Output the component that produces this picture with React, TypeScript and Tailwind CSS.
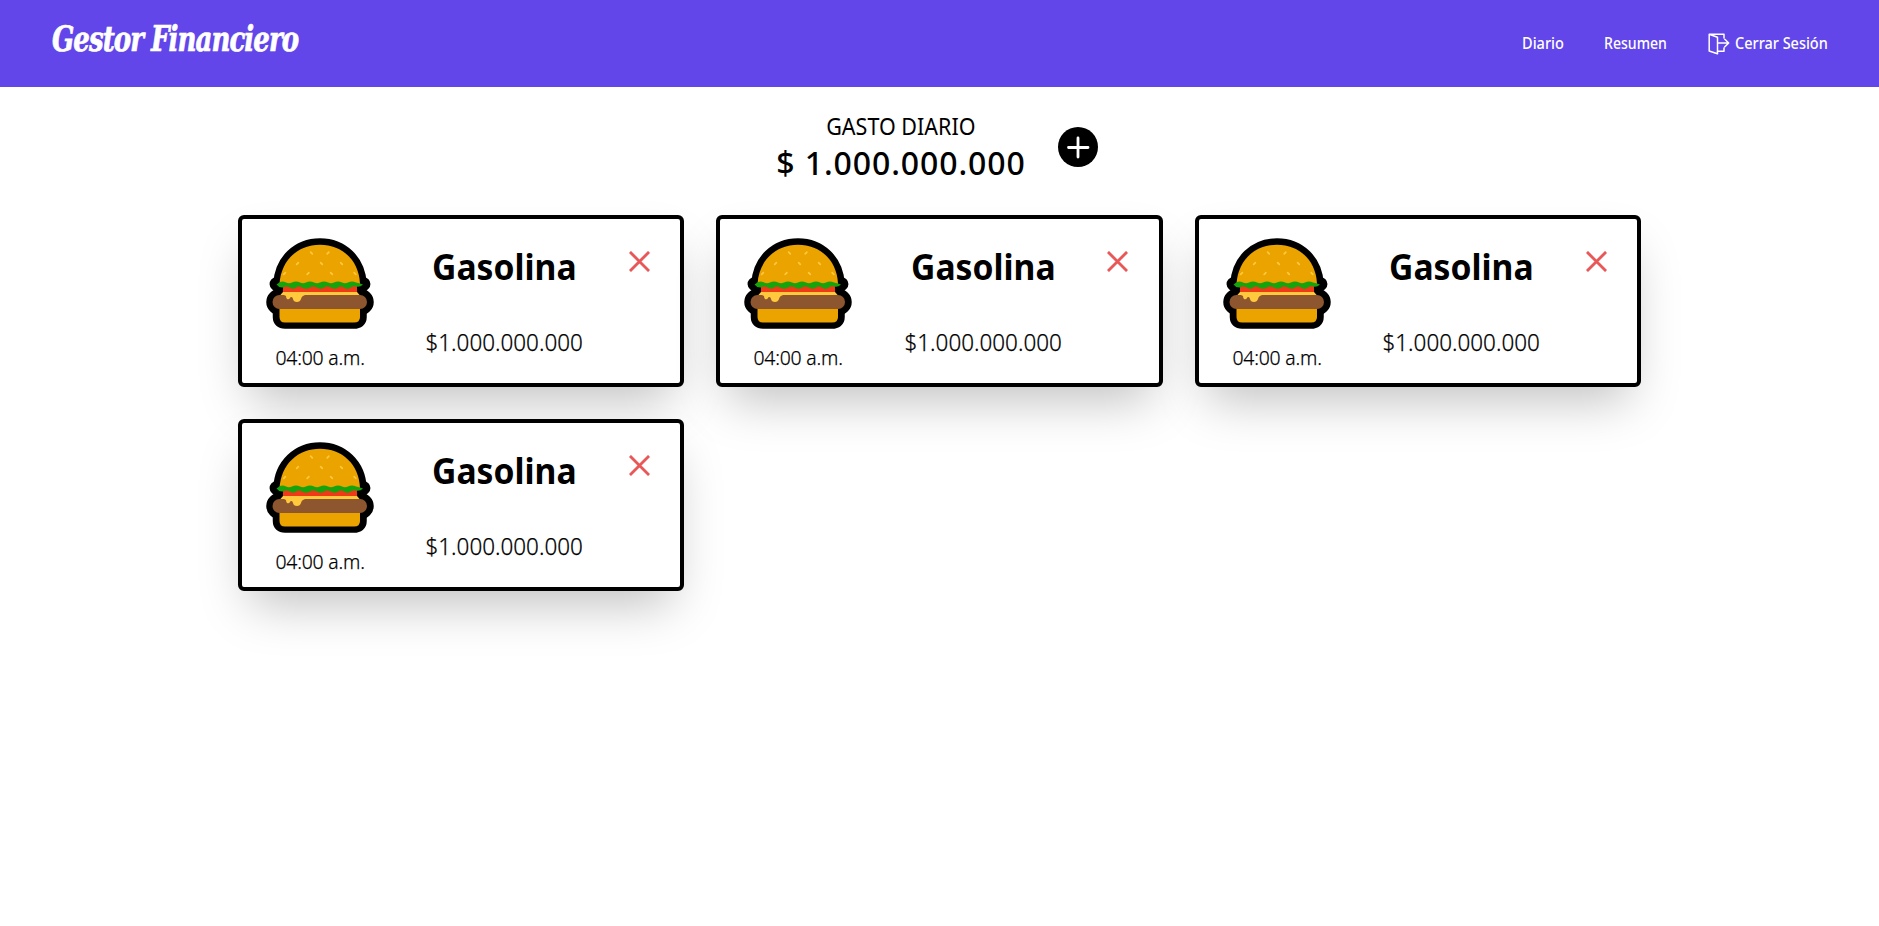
const expenses = [
  { id: 1, name: "Gasolina", amount: "$1.000.000.000", time: "04:00 a.m." },
  { id: 2, name: "Gasolina", amount: "$1.000.000.000", time: "04:00 a.m." },
  { id: 3, name: "Gasolina", amount: "$1.000.000.000", time: "04:00 a.m." },
  { id: 4, name: "Gasolina", amount: "$1.000.000.000", time: "04:00 a.m." },
];

const seeds = [
  [56.5, 23, 45], [73, 23, -45], [42.5, 33.5, -45], [66.5, 33.5, 45], [86.5, 33.5, 45],
  [29.5, 43.5, -45], [53, 43.5, -45], [76.5, 43.5, 45], [100, 43.5, 45],
];

function Burger() {
  return (
    <svg width="108" height="92" viewBox="11 8 108 92" aria-hidden="true">
      <g stroke="#000" strokeWidth="13.5" strokeLinejoin="round" fill="#000">
        <path d="M25 54V54C26 31 43 15 65 15S104 31 105 54Z" />
        <path d="M21.300 54H108.700L102 60H28Z" />
        <rect x="18" y="65.500" width="94" height="13" rx="6.500" />
        <path d="M25 66L30 58H100L105 66Z" />
        <path d="M24.500 79H105V87Q105 92 99 92H30Q24.500 92 24.500 87Z" />
      </g>
      <path d="M24.500 54C26 30 43 14.700 65 14.700S104 30 105 54Z" fill="#eba300" />
      {seeds.map(([x, y, r]) => (
        <rect key={`${x}-${y}`} x={x - 2} y={y - 0.8} width="4" height="1.700" rx="0.800" fill="#ffc83d" transform={`rotate(${r} ${x} ${y})`} />
      ))}
      <path d="M28 56H102V62.500H28Z" fill="#f03a17" />
      <path d="M21.500 54.500L25 52Q28 51 31 52.500Q34 54 37 52.500Q41 50.500 45 52.500Q48 54 51 52.500Q55 50.500 59 52.500Q62 54 65 52.500Q69 50.500 73 52.500Q76 54 79 52.500Q83 50.500 87 52.500Q90 54 93 52.500Q97 50.500 101 52.500Q104 53 108 54.500Q105 57.500 101 56.500Q98 55.500 95 58Q92 60 89 57.500Q86 55.500 83 57.500Q80 60 76 57.500Q72 55.500 69 57.500Q66 60 62 57.500Q58 55.500 55 57.500Q51 60 47 57.500Q44 55.500 41 57.500Q38 60 35 57.500Q31 55.500 28 57.500Q24 58 21.500 54.500Z" fill="#16a30c" />
      <path d="M28 62H102L105.500 66H24.500Z" fill="#ffc83d" />
      <rect x="17.500" y="65" width="94.500" height="14" rx="7" fill="#8e562e" />
      <path d="M29 65H50Q46.500 66 46 69Q45 72 42 72Q38.500 72 38 69Q37.500 67 36.500 67Q35 67 35 68Q34 70 32 69Q31 68 31 66Z" fill="#ffc83d" />
      <path d="M24.500 79H105V87Q105 92.500 99 92.500H30Q24.500 92.500 24.500 87Z" fill="#eba300" />
    </svg>
  );
}

function ExitIcon() {
  return (
    <svg className="mt-[2px]" width="22" height="22" viewBox="0 0 22 22" fill="none" stroke="currentColor" strokeWidth="1.500" strokeLinejoin="round" strokeLinecap="round" aria-hidden="true">
      <path d="M16 5V1.200H1.200V18L9.500 20.700V4.200L1.200 1.200" />
      <path d="M9.500 18.300H16V15M10.500 10H20.500M16.800 6.200L20.700 10L16.800 13.800" />
    </svg>
  );
}

function ExpenseCard({ name, amount, time }: { name: string; amount: string; time: string }) {
  return (
    <article className="flex h-[172px] rounded-md border-4 border-black bg-white px-6 shadow-2xl">
      <div className="flex w-[108px] shrink-0 flex-col items-center pt-[19px]">
        <Burger />
        <time className="mt-[14px] scale-x-[0.97] whitespace-nowrap text-[20px] leading-7 font-light tracking-[-0.2px] [-webkit-text-stroke:0.25px_black]">{time}</time>
      </div>
      <div className="ml-[50px] flex w-[161px] shrink-0 flex-col items-center pt-[28px]">
        <h2 className="scale-x-[0.935] text-4xl leading-10 font-bold whitespace-nowrap">{name}</h2>
        <p className="mt-[39px] scale-x-[0.935] text-2xl leading-8 font-light whitespace-nowrap [-webkit-text-stroke:0.25px_black]">{amount}</p>
      </div>
      <button className="mt-[32px] ml-[44px] h-[21px] w-[21px] shrink-0 text-[#e95858]" aria-label="Eliminar">
        <svg width="21" height="21" viewBox="0 0 20 20" stroke="currentColor" strokeWidth="2.700" aria-hidden="true">
          <path d="M0.900 0.900L19.100 19.100M19.100 0.900L0.900 19.100" />
        </svg>
      </button>
    </article>
  );
}

export default function App() {
  return (
    <div className="min-h-[926px] bg-white font-['Noto_Sans',sans-serif] text-black">
      <header className="flex h-[87px] items-start justify-between bg-[#6246ea] pr-[52px] pl-[52px] text-white">
        <h1 className="mt-[16px] w-[248px] origin-left scale-x-[0.805] whitespace-nowrap font-['DejaVu_Serif_Condensed','DejaVu_Serif',serif] text-[36px] leading-[44px] font-bold italic tracking-[-1.2px] [-webkit-text-stroke:0.7px_white]">Gestor Financiero</h1>
        <nav className="mt-[31px] flex h-6 items-center text-base leading-6 font-medium">
          <a className="w-[82px] origin-left scale-x-[0.91] whitespace-nowrap">Diario</a>
          <a className="w-[104px] origin-left scale-x-[0.88] whitespace-nowrap">Resumen</a>
          <a className="flex items-center gap-[5px] whitespace-nowrap"><ExitIcon /><span className="w-[92px] origin-left scale-x-[0.905]">Cerrar Sesión</span></a>
        </nav>
      </header>
      <main>
        <section className="flex h-[128px] items-start justify-center pt-[23px] pr-[4px]">
          <div className="flex w-[248px] flex-col items-center">
            <h2 className="scale-x-[0.935] text-[23px] leading-8 whitespace-nowrap">GASTO DIARIO</h2>
            <p className="mt-[1px] text-[32px] leading-10 font-medium tracking-[0.9px] whitespace-nowrap">$ 1.000.000.000</p>
          </div>
          <button className="mt-[17px] ml-[33px] h-10 w-10" aria-label="Agregar gasto">
            <svg width="40" height="40" viewBox="0 0 40 40" aria-hidden="true">
              <circle cx="20" cy="20" r="20" />
              <path d="M20 11V30M10.500 20.500H30" stroke="#fff" strokeWidth="2.800" strokeLinecap="round" />
            </svg>
          </button>
        </section>
        <section className="mx-auto grid w-[1403px] grid-cols-3 gap-8">
          {expenses.map((item) => (
            <ExpenseCard key={item.id} name={item.name} amount={item.amount} time={item.time} />
          ))}
        </section>
      </main>
    </div>
  );
}
